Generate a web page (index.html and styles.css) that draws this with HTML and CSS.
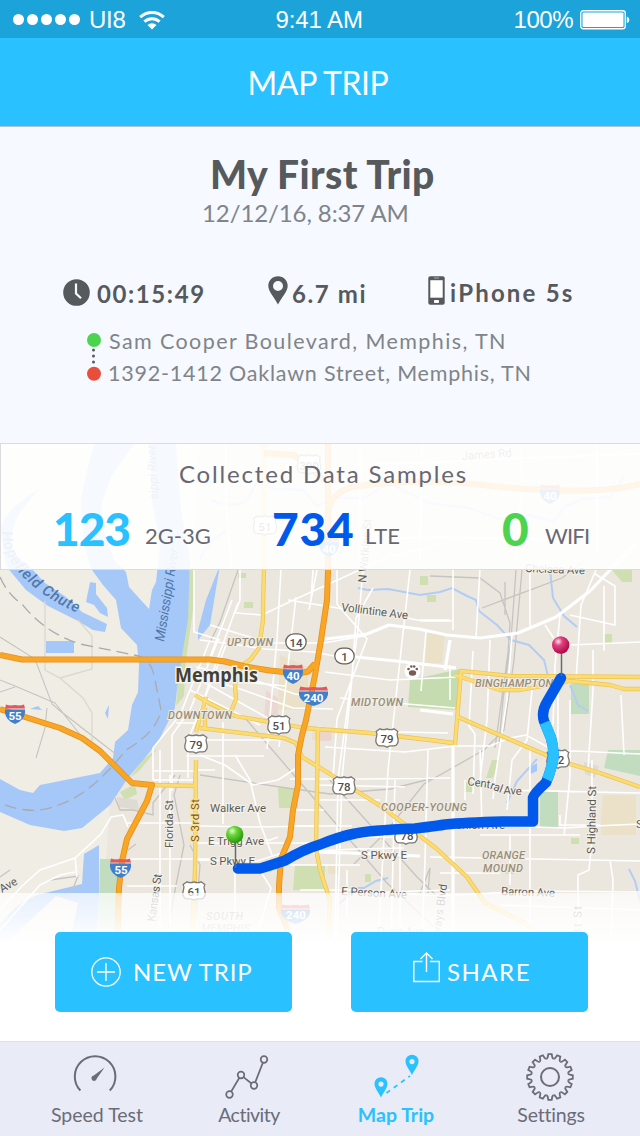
FILE: index.html
```html
<!DOCTYPE html>
<html lang="en">
<head>
<meta charset="utf-8">
<title>Map Trip</title>
<link rel="stylesheet" href="styles.css">
</head>
<body>
<div class="screen">
  <header class="statusbar">
    <div class="carrier"><span class="signal"><i></i><i></i><i></i><i></i><i></i></span><span class="carrier-name">UI8</span>
      <svg class="wifi" width="26" height="20" viewBox="0 0 26 20"><g fill="none" stroke="#fff" stroke-width="3"><path d="M1.2 7.2a17 17 0 0 1 23.6 0"/><path d="M5.4 11.7a11 11 0 0 1 15.2 0"/></g><path d="M8.5 15a6.6 6.6 0 0 1 9 0L13 19.4z" fill="#fff"/></svg>
    </div>
    <div class="clock">9:41 AM</div>
    <div class="battery"><span>100%</span>
      <svg width="50" height="20" viewBox="0 0 50 20"><rect x=".75" y=".75" width="44.5" height="18" rx="2.5" fill="none" stroke="#fff" stroke-width="1.3"/><rect x="2.5" y="2.5" width="41" height="14.5" rx="1" fill="#fff"/><path d="M46.8 6.5q2.6 1 2.6 3.4t-2.6 3.3z" fill="#fff"/></svg>
    </div>
  </header>
  <div class="navbar"><h1>MAP TRIP</h1></div>

  <section class="trip">
    <h2>My First Trip</h2>
    <p class="date">12/12/16, 8:37 AM</p>
    <div class="stats">
      <div class="stat time"><svg width="27" height="27" viewBox="0 0 27 27"><circle cx="13.5" cy="13.5" r="13.3" fill="#565a5c"/><path d="M13 4.5v10l5 4.8" fill="none" stroke="#f6f9ff" stroke-width="2.2"/></svg><span>00:15:49</span></div>
      <div class="stat dist"><svg width="20" height="29" viewBox="0 0 20 29"><path fill="#565a5c" fill-rule="evenodd" d="M10 .2C4.500.2.3 4.400.3 9.800c0 6 6.200 11.500 9.700 18.800 3.500-7.300 9.700-12.800 9.700-18.800C19.700 4.400 15.500.2 10 .2zM10 5a5 5 0 1 1 0 10 5 5 0 0 1 0-10z"/></svg><span>6.7 mi</span></div>
      <div class="stat phone"><svg width="17" height="29" viewBox="0 0 17 29"><rect x=".3" y=".3" width="16.400" height="28.400" rx="2" fill="#565a5c"/><path d="M2.300 4.200h12.400v17.500H2.300z" fill="#fff"/><path d="M6 2h5" stroke="#aaa"/><rect x="6" y="24" width="5" height="3" rx=".7" fill="#fff"/></svg><span>iPhone 5s</span></div>
    </div>
    <div class="route">
      <svg width="16" height="50" viewBox="0 0 16 50"><circle cx="8" cy="8" r="7" fill="#4cd451"/><circle cx="8" cy="41.700" r="7" fill="#e94e3d"/><g fill="#565a5c"><circle cx="7.500" cy="18" r="1.500"/><circle cx="7.500" cy="24" r="1.500"/><circle cx="7.500" cy="30" r="1.500"/></g></svg>
      <div class="stops"><p class="from">Sam Cooper Boulevard, Memphis, TN</p><p class="to">1392-1412 Oaklawn Street, Memphis, TN</p></div>
    </div>
  </section>

  <section class="mapview">
    <svg class="map" width="640" height="598" viewBox="0 443 640 598">
      <defs>
        <symbol id="us" viewBox="0 0 24 20" overflow="visible"><path d="M5 .8Q8.500 2.500 12 .8 15.500 2.500 19 .8L22.800 3.500Q21.300 6 22.500 9 24.500 14 21 17.300 18.500 18 15.500 17.800 13.300 18 12 19.200 10.700 18 8.500 17.800 5.500 18 3 17.300-.5 14 1.500 9 2.700 6 1.200 3.500z" fill="#fff" stroke="#7b7973" stroke-width="1.300"/></symbol>
        <symbol id="oval" viewBox="0 0 22 18" overflow="visible"><rect x=".8" y=".8" width="20.400" height="16.400" rx="8.200" fill="#fff" stroke="#65635d" stroke-width="1.300"/></symbol>
        <symbol id="inter" viewBox="0 0 20 20" preserveAspectRatio="none"><path d="M0 5.500h20Q21 16 10 20-1 16 0 5.500z" fill="#3f7fcb"/><path d="M1 .5Q5 2 10 1q5 1 9-.5l1 4H0z" fill="#df5961"/></symbol>
        <radialGradient id="gpin" cx=".36" cy=".3" r=".7"><stop offset="0" stop-color="#e4fbd5"/><stop offset=".35" stop-color="#6cd83c"/><stop offset="1" stop-color="#2b9a0c"/></radialGradient>
        <radialGradient id="rpin" cx=".36" cy=".3" r=".7"><stop offset="0" stop-color="#ffe3ee"/><stop offset=".35" stop-color="#e0407f"/><stop offset="1" stop-color="#b00948"/></radialGradient>
        <linearGradient id="fade" x1="0" y1="0" x2="0" y2="1"><stop offset="0" stop-color="#fff" stop-opacity=".72"/><stop offset=".85" stop-color="#fff" stop-opacity="1"/></linearGradient>
      </defs>
      <path d="M0 443h640v598H0z" fill="#ebe7df"/>
      <path d="M0 443H200L189 620 175 712 110 805 100 941H0z" fill="#f0ede5"/>
      <!-- parks and blocks -->
      <g fill="#cfdfb2">
        <path d="M190 568h5l-2 42-7 50-2 36-8 10 3-40 5-45zM158 748l-18 22-10 8 12-18zM120 792l15-8 2 10-12 6z"/>
        <path d="M278 788h20v20h-19zM295 865h30v25h-32zM365 874h6v8h-6zM238 573h8v5h-8zM244 602h9v6h-9zM420 576h8v9h-8zM427 595h9v7h-9zM604 634h8v9h-8zM464 782h9v10h-9zM492 760h7l-6 18h-7zM612 570h20v12h-10zM571 838h8v6h-8zM504 864h10v10h-8z"/>
        <path d="M410 680l50-11-2 41-50-3z" fill="#c4dcb0"/>
        <path d="M571 684h18v30h-18zM540 791h18v36h-18zM608 750h32v26l-36-8zM100 859h20v82H98z" fill="#c2dcc0"/>
      </g>
      <path d="M427 633h18l-3 30h-17zM603 795h33v40h-35v-16zM280 655l28 12v43h-30zM312 728h20v12h-20zM328 866h12v8h-12z" fill="#e9dfc0" opacity=".75"/>
      <path d="M266 690l12 8v25h-14zM315 731h16v10h-16z" fill="#edcfcc" opacity=".65"/>
      <path d="M117 797l20 3 2 10-20-3zM584 762l15 4-4 12-10-4z" fill="#dedbd2"/>
      <!-- water -->
      <g fill="#a6c8f8">
        <path d="M95 443Q86 470 81 500 82 545 92 570L103 585 116 600 121 628 137 645 139 665 138 692 132 705 128 730 115 742 113 758 100 773 70 779 40 785 33 793 20 790 0 779V812L30 825 64 831 82 828 98 815 110 805 128 778 158 742 175 708 177 690 183 650 188 620 190 560 181 510 176 443H150L152 500 160 545 156 582 152 590 149 609 129 587 126 572 114 560 105 535 101 505 112 475 135 443z"/>
        <path d="M0 528Q10 505 38 490L20 512Q8 532 13 552L32 569 45 583 66 597 82 612 107 624 105 632 93 630 76 620 48 606 26 590 6 566z"/>
        <path d="M90 582l6 1 0 11 11 14 1 9-8-4-6-8-8-3zM46 641h28v12H46zM84 854l15-9v50l-2 46H70l8-38-22-7-31 29-17 16H0V924Q20 898 45 893L82 884zM220 565L210 625 198 640 198 630 206 600z"/>
        <path d="M105 713l4-8-1 14zM30 709l8-3 4 4zM529 768l8-5v8l-6 3z"/>
      </g>
      <g fill="none" stroke="#b2cdf4" stroke-width="2">
        <path d="M420 595l20-3 12-4 15 8 9 4 3 11 18 14 14 15 18 5 15 15 4 16M570 685l8 20 10 6M550 570l3 28 11 18 13 11M358 588l10 2 20-1 32 6M338 905l18-17 8 0 12-7 12-3M629 869l6 12 5 20M507 803l10-22 20-22"/>
        <path d="M212 500q8 5 20 5t18-10l8-16 15 10 30 1 14 16 18-8 30 0 24-15 40 20 40 5 30 11 30-4 25 7 10-15 18-8 28-2 14-20M200 560q8-20 25-28" stroke-width="2.500"/>
      </g>
      <!-- rail and minor lines -->
      <g fill="none" stroke="#c6c4c1" stroke-width="1.300">
        <path d="M0 637l35 22 17 45 7 6 58 45M0 680l15 6 40 17 27 34 31 29M0 692l15-5M47 708l-2 20-9 30" stroke-width="1.100"/>
        <path d="M45 601v69l15 8 32-9V636L78 620M60 678l23 20 9 15v28" stroke="#dcd8ce"/>
        <path d="M238 570l-18 52-10 20M245 718l60 70 82 95 80 75M200 775l80 12 50 7 35-3 25-2 40-10M328 778l90 100 22 21M115 798l5 12 13 0 20 5 0-12 22-28M482 608l80-30 20-15M505 615l0-33M516 570l-5 70-8 60-4 44M522 570l-8 90-10 70-20 20-60 34-40 50-30 30M430 576l50 2 20 15 10 30-2 30-13 95M420 893l10-25-2 25"/>
        <path d="M180 775l-6 20 10 50-8 40-10 55M50 880l28-4-6 15M0 877l10-7M128 850l8-6M190 845l10 20-6 75" />
      </g>
      <path d="M0 577q8 18 22 27Q45 633 80 644l59 12Q152 660 155 680l6 30q-4 22-35 40-35 45-70 56-25 10-56-3" fill="none" stroke="#aaa" stroke-width="1.300" stroke-dasharray="12 6"/>
      <!-- street grid -->
      <g fill="none" stroke="#fff" stroke-width="1.600">
        <path d="M194 569v63l26 8M210 640l-30 75-27 33v32M218 640l-28 70-18 25v56M226 645l-26 65-12 30v38M238 603l-22 60-20 60M232 600l-25 65M153 771h42M153 780h42M176 723h24M200 740h80M186 756h78M200 640l32 4 33 5 48 3 27 5M210 625l60 18 54 0 40-7M236 613l26 2 36-17 90-41 50-12M196 667l55 12 44 15 30 5M195 675l48 15 50 18 40 1M190 690l70 35M200 680l80 45M205 669l30 12 50 5"/>
        <path d="M240 570v30l-5 13M281 569l-4 70-10 110M296 597l-7 60-10 90M313 570l-2 30M317 570l-8 40M200 755l25 10 28 20 25-5 20-13M223 722v102M235 755l15 25 10 43 12 32M200 826l55 1 60-1M195 843h50l70 0M195 860l62 1 22-7 40-3 35-2 50-1M250 840l20 0 8-3M256 864l15 24-15 50M235 862v80M337 569v35l30 35-30 80-4 60M363 569l-5 60-20 150-3 160M373 588l-17 30-4 60-10 100-5 160M410 570l-10 90-12 110-10 170M426 631l-5 60M453 570l0 60M480 569l-4 68M530 570l0 58M545 625l12 18M560 615l-5 50-2 60M596 570l-15 35-5 75M604 586v65"/>
        <path d="M392 615l30 6 30 0M288 600l50 8 40 6M325 672l65 8 70-3M340 698l55 5 60 5M318 727l30 4 100 2M325 747l80 5 50-6h35l20-8 16-3 27 15 110 5M420 620l30 0M570 615l45 10V586l-20-12M570 645l70-3M450 665v35M473 651l-4 75 6 8-2 60M490 640l-3 80-7 60M512 634l-5 65-12 80-2 20M532 690l-5 50-15 20-5 50M558 673v80M570 700v76l-6 60M593 650v40l-5 80M621 695l3 60M290 779l70 0 90-1M315 785l90 2M320 800h60M292 810h32M292 826l60 0M330 837h80M347 870v45M290 865h70M300 890l60 0 80 6 90-5 110 1M350 893l100-3M395 779l-4 160M400 840l0 100M428 750l-3 110-3 80M465 780v20M480 750l2 80M510 835v50M530 750v190M560 815v10l40 0M500 790l140 3M500 826l65 2 30-2 45-2M480 835l100 0M430 857l210 4M440 873h60M592 760v80l-3 30-11 5v20l2 45M610 860l3 20-2 60M500 905l140 5M160 750v180M170 775v165M195 830v110M127 823h66M127 859h90M127 886l50 0M195 770h20"/>
        <path d="M0 910l22-24 18-16 35-12 26-24 10-17 12-2 5 12M0 930l40-45 20-10 15-3M75 857l2 20"/>
        <path d="M226 443v60l6 67M265 443v80M360 443l0 120M422 443l-2 120M520 443l2 42-6 75M597 443v110M340 465l80-2 100-5 120-4M340 540l100-3 120 3"/>
      </g>
      <g fill="none" stroke="#fff" stroke-width="3.200" stroke-linejoin="round">
        <path d="M325 639l27-3 15-2 22-9 30 4 28 6 33 3 38-5 38-16 34-26 20-21 25-25M346 656l50 5 60 7M420 710l33 4M453 745v195M450 640l-5 30M280 855l30-3 40 1 70 3"/>
      </g>
      <!-- arterial roads -->
      <g fill="none" stroke-linejoin="round">
        <path d="M264 443v127l-1 35 0 15-4 28-8 11-10 7-6 18 1 15-8 20M195 695l14 8 26 13 70 12 65 5 60 7 23 3M200 728l84 10 12 5 6 14 20 12 60 38 55 42 30 28 18 26 40 20 20 18 16 32M455 745l6-74 50 5 129 1M455 675l45 15 20 0 50-9 40 4 14 4 16 0M458 717l60 26 42 18 40 12 40 14M153 785l42 1 1-20M318 728l-2 120 4 22 10 30-2 40M196 760l-1 110-3 70M196 732l10-35M205 728l0-20" stroke="#edc34e" stroke-width="4.300"/>
        <path d="M264 443v127l-1 35 0 15-4 28-8 11-10 7-6 18 1 15-8 20M195 695l14 8 26 13 70 12 65 5 60 7 23 3M200 728l84 10 12 5 6 14 20 12 60 38 55 42 30 28 18 26 40 20 20 18 16 32M455 745l6-74 50 5 129 1M455 675l45 15 20 0 50-9 40 4 14 4 16 0M458 717l60 26 42 18 40 12 40 14M153 785l42 1 1-20M318 728l-2 120 4 22 10 30-2 40M196 760l-1 110-3 70M196 732l10-35M205 728l0-20" stroke="#fbdb74" stroke-width="2.900"/>
        <path d="M0 655l22 4.500 188 0 15 2 20 5 25 4 28 3 10-2 7-8M0 709l60 19 22 10 18 13 32 32 20 2-5 16-20 38-5 22-3 27-2 62M328 443l0 127-1 30-6 40-6 35-6 30-3 15-4 15-4 20 0 30-5 25-3 27-9 22-2 27 0 22 8 20 5 50M328 515q2-25 30-29 60-8 125-1 110 12 157-1M264 453l30 2 30 25" stroke="#e88f20" stroke-width="6"/>
        <path d="M0 655l22 4.500 188 0 15 2 20 5 25 4 28 3 10-2 7-8M0 709l60 19 22 10 18 13 32 32 20 2-5 16-20 38-5 22-3 27-2 62M328 443l0 127-1 30-6 40-6 35-6 30-3 15-4 15-4 20 0 30-5 25-3 27-9 22-2 27 0 22 8 20 5 50M328 515q2-25 30-29 60-8 125-1 110 12 157-1M264 453l30 2 30 25" stroke="#f8a625" stroke-width="4.400"/>
      </g>
      <!-- shields -->
      <use href="#oval" x="285" y="633" width="22" height="18"/><use href="#oval" x="334" y="647" width="21" height="18"/>
      <use href="#us" x="267" y="715" width="24" height="20"/><use href="#us" x="184" y="734" width="24" height="20"/><use href="#us" x="375" y="728" width="24" height="20"/><use href="#us" x="332" y="776" width="24" height="20"/><use href="#us" x="182" y="881" width="24" height="20"/><use href="#us" x="546" y="749" width="24" height="20"/><use href="#us" x="394" y="825" width="24" height="20"/><use href="#us" x="252" y="515" width="26" height="21"/><use href="#us" x="296" y="454" width="26" height="21"/>
      <use href="#inter" x="283" y="664" width="20" height="20"/><use href="#inter" x="299" y="686" width="29" height="20"/><use href="#inter" x="5" y="704" width="20" height="20"/><use href="#inter" x="110" y="858" width="21" height="20"/><use href="#inter" x="281" y="904" width="29" height="20"/><use href="#inter" x="540" y="484" width="20" height="20"/><use href="#inter" x="319" y="536" width="20" height="21"/>
      <g class="num"><text x="296" y="646.500">14</text><text x="344.500" y="660.500">1</text><text x="279" y="730">51</text><text x="196" y="749">79</text><text x="387" y="743">79</text><text x="344" y="791">78</text><text x="194" y="896">61</text><text x="561" y="764">2</text><text x="407" y="840">78</text><text x="265" y="531">51</text><text x="309" y="470">300</text></g>
      <g class="num light"><text x="293" y="680">40</text><text x="313.500" y="702">240</text><text x="15" y="720">55</text><text x="121" y="874">55</text><text x="296" y="919">240</text><text x="550" y="500">40</text><text x="329" y="553">40</text></g>
      <circle cx="412.500" cy="671" r="8" fill="#fff"/><g fill="#795b53"><ellipse cx="412.500" cy="673" rx="3.700" ry="2.700"/><circle cx="408.500" cy="669" r="1.300"/><circle cx="411.300" cy="666.500" r="1.300"/><circle cx="414.200" cy="666.500" r="1.300"/><circle cx="416.800" cy="669" r="1.300"/></g>
      <!-- labels -->
      <g class="street">
        <text x="341" y="611" transform="rotate(7 341 611)" textLength="67">Vollintine Ave</text>
        <text x="210" y="812" textLength="56">Walker Ave</text><text x="208" y="845" textLength="56">E Trigg Ave</text><text x="210" y="865" textLength="45">S Pkwy E</text><text x="361" y="859" textLength="46">S Pkwy E</text>
        <text x="341" y="895" transform="rotate(3 341 895)" textLength="66">E Person Ave</text><text x="377" y="935" textLength="47">Dunn Ave</text><text x="501" y="895" transform="rotate(2 501 895)" textLength="54">Barron Ave</text>
        <path id="cen" d="M467 785L488 788 504 794 522 795" fill="none" stroke="none"/><text textLength="56"><textPath href="#cen">Central Ave</textPath></text>
        <text x="455" y="829" textLength="50">Union Ave</text><text x="525" y="572" transform="rotate(2 525 572)" textLength="60">Chelsea Ave</text><text x="462" y="460" transform="rotate(-4 462 460)" textLength="50">James Rd</text>
        <text transform="translate(173 848) rotate(-90)" textLength="48">Florida St</text><text class="third" transform="translate(199 842) rotate(-90)" textLength="43">S 3rd St</text><text transform="translate(155 922) rotate(-82)" textLength="48">Kansas St</text><text transform="translate(595 854) rotate(-89)" textLength="68">S Highland St</text><text transform="translate(440 936) rotate(-82)" textLength="52">ways Blvd</text><text transform="translate(581 940) rotate(-89)" textLength="34">ott St</text><text transform="translate(366 583) rotate(-85)" textLength="64">N Watkins St</text><text x="2" y="893" transform="rotate(-30 2 893)">Ave</text><text x="636" y="828">S</text>
      </g>
      <g class="area"><text x="227" y="646" textLength="46">UPTOWN</text><text x="168" y="719" textLength="64">DOWNTOWN</text><text x="351" y="706" textLength="52">MIDTOWN</text><text x="475" y="687" textLength="78">BINGHAMPTON</text><text x="381" y="811" textLength="86">COOPER-YOUNG</text><text x="482" y="859" textLength="43">ORANGE</text><text x="483" y="872" textLength="40">MOUND</text><text x="206" y="920" textLength="37">SOUTH</text><text x="201" y="932" textLength="49">MEMPHIS</text></g>
      <g class="river"><text transform="translate(164 642) rotate(-81)" textLength="94">Mississippi River</text><text transform="translate(158 499) rotate(-93)" textLength="54" class="upper">sippi River</text><path id="hop" d="M2 532Q3 558 25 579T78 613" fill="none"/><text class="chute" textLength="116"><textPath href="#hop">Hopefield Chute</textPath></text></g>
      <text class="city" x="175" y="682" textLength="83" lengthAdjust="spacingAndGlyphs">Memphis</text>
      <path d="M0 893h640v60H0z" fill="url(#fade)"/><path d="M0 950h640v91H0z" fill="#fff"/>
      <!-- recorded route -->
      <g fill="none" stroke-width="10.500" stroke-linecap="round" stroke-linejoin="round">
        <path d="M238 868.500h22q7-2 25-8 18-11 35-16 20-8 35-11 12-3 60-5 25-3 30-4 20-2 57-3h31v-24q1-4 13-15Q549 776 551 768 556 755 551 738L544 721Q541 712 547 702L561 678" stroke="#0059ea"/>
        <path d="M544.700 722.500L551 738Q556 755 551 768 549.500 774 547 779.500" stroke="#29c1ff" stroke-linecap="butt"/>
      </g>
      <path d="M235.500 840v28M561.500 652v24" stroke="#66696d" stroke-width="1.500"/>
      <circle cx="234.700" cy="834.500" r="8.700" fill="url(#gpin)"/><circle cx="560.700" cy="645" r="8.700" fill="url(#rpin)"/>
    </svg>
    <div class="samples">
      <h3>Collected Data Samples</h3>
      <div class="counts"><b class="c3g">123</b><span class="l3g">2G-3G</span><b class="clte">734</b><span class="llte">LTE</span><b class="cwifi">0</b><span class="lwifi">WIFI</span></div>
    </div>
    <div class="actions">
      <div class="btn new"><svg width="30" height="30" viewBox="0 0 30 30" fill="none" stroke="#fff" stroke-width="1.300"><circle cx="15" cy="15" r="14.200"/><path d="M6 15h18M15 6v18"/></svg><span>NEW TRIP</span></div>
      <div class="btn share"><svg width="27" height="31" viewBox="0 0 27 31" fill="none" stroke="#fff" stroke-width="1.400"><path d="M9.500 9.500H.8v20h25.500v-20H17M13.500 20V1.500M7.500 7l6-6 6 6"/></svg><span>SHARE</span></div>
    </div>
  </section>

  <nav class="tabs">
    <div class="tab speed"><svg width="46" height="48" viewBox="0 0 46 48"><path d="M8.400 36.500a20.300 20.300 0 1 1 29.400 0" fill="none" stroke="#6b6c78" stroke-width="2"/><path d="M32.500 13.500L24.800 24.500a2.700 2.700 0 1 1-3-3z" fill="#6b6c78"/></svg><span>Speed Test</span></div>
    <div class="tab activity"><svg width="46" height="48" viewBox="0 0 46 48" fill="none" stroke="#6b6c78" stroke-width="1.700"><circle cx="4.500" cy="40.500" r="3.300"/><circle cx="16" cy="21" r="3.300"/><circle cx="29" cy="31.500" r="3.300"/><circle cx="39" cy="5.500" r="3.300"/><path d="M6.200 37.500l8-13.500M18.500 23.200l8 6.300M30.200 28.400l7.700-19.800"/></svg><span>Activity</span></div>
    <div class="tab trips"><svg width="46" height="48" viewBox="0 0 46 48"><g fill="#29c1ff" fill-rule="evenodd"><path id="pin" d="M8 23.200a6.500 6.500 0 0 0-6.500 6.500C1.500 34 5.500 38 8 43.500c2.500-5.500 6.500-9.500 6.500-13.800A6.500 6.500 0 0 0 8 23.200zm0 4.300a2.600 2.600 0 1 1 0 5.200 2.600 2.600 0 0 1 0-5.200z"/><use href="#pin" x="31" y="-22.500"/></g><path d="M13.500 39L37 22" stroke="#29c1ff" stroke-width="1.700" stroke-dasharray="4.500 4.500"/></svg><span>Map Trip</span></div>
    <div class="tab settings"><svg width="48" height="48" viewBox="-24 -24 48 48" fill="none" stroke="#6b6c78" stroke-width="1.800"><defs><g id="quad"><path id="cog" d="M-3.610-18.140Q-2.500-18.600-2.300-19.800L-1.700-22.800H1.700L2.300-19.800Q2.500-18.600 3.610-18.140"/><use href="#cog" transform="rotate(22.500)"/><use href="#cog" transform="rotate(45)"/><use href="#cog" transform="rotate(67.500)"/></g></defs><use href="#quad"/><use href="#quad" transform="rotate(90)"/><use href="#quad" transform="rotate(180)"/><use href="#quad" transform="rotate(270)"/><circle r="9" stroke-width="2"/></svg><span>Settings</span></div>
  </nav>
</div>
</body>
</html>
```
FILE: styles.css
```css
* { box-sizing: border-box; }
body { margin: 0; font-family: Lato, "Open Sans", sans-serif; font-variant-ligatures: none; }
h1, h2, h3, p { margin: 0; font-weight: 400; }
svg { display: block; flex: none; }
span, b, h1, h2, h3, p { white-space: nowrap; }
.screen { width: 640px; height: 1136px; display: grid; grid-template-rows: 38px 89px 316px 598px 95px; background: #fff; overflow: hidden; }

.statusbar { background: #1ca3da; color: #fff; font: 24px/38px "Liberation Sans", Arial, sans-serif; display: grid; grid-template-columns: 1fr 88px 1fr; padding: 0 10px 0 13px; }
.carrier { display: flex; align-items: center; }
.signal { display: flex; gap: 3px; }
.signal i { width: 11px; height: 11px; border-radius: 50%; background: #fff; }
.carrier-name { margin: 1px 14px 0 9px; letter-spacing: -.3px; }
.clock { letter-spacing: -.1px; white-space: nowrap; padding-top: 1px; margin-left: -2px; }
.battery { display: flex; justify-content: flex-end; align-items: center; gap: 7px; }
.battery span { letter-spacing: -.5px; }

.navbar { background: #29c1ff; color: #fff; border-bottom: 1px solid #b9bed2; text-align: center; padding-right: 4px; }
.navbar h1 { font-size: 32px; line-height: 89px; letter-spacing: -.4px; }

.trip { background: #f6f9ff; color: #565a5c; }
.trip h2 { margin: 23px 0 0 210px; font-size: 39px; line-height: 48px; font-weight: 900; letter-spacing: .4px; }
.date { margin: 0 0 0 202px; font-size: 24px; line-height: 30px; letter-spacing: -.100px; color: #808488; }
.stats { margin: 46px 0 0 63px; display: flex; height: 36px; }
.stat { display: flex; font-weight: 700; font-size: 24px; line-height: 39px; letter-spacing: 1.600px; }
.time { width: 205px; gap: 7px; }
.time svg { margin-top: 5px; }
.dist { width: 160px; gap: 4px; }
.phone { gap: 5px; letter-spacing: 2.200px; }
.dist svg, .phone svg { margin-top: 2px; }
.phone span { margin-top: -1px; }
.route { margin: 21px 0 0 86px; display: flex; gap: 7px; font-size: 21.500px; color: #808488; }
.route svg { margin-top: 1px; }
.stops p { line-height: 32px; }
.stops { margin-top: -6px; }
.from { letter-spacing: 1.400px; }
.to { letter-spacing: .780px; margin-left: -1px; }

.mapview { display: grid; grid-template-rows: 127px 1fr 148px; grid-template-columns: 640px; }
.map { grid-area: 1 / 1 / 4 / 2; }
.samples { grid-area: 1 / 1; background: rgba(255,255,255,.9); border: 1px solid #dcdcdf; border-right: 0; color: #686873; }
.samples h3 { margin: 15px 0 0 178px; font-size: 24px; line-height: 30px; letter-spacing: 1.830px; }
.counts { display: flex; align-items: baseline; padding-left: 52px; height: 60px; line-height: 60px; margin-top: 10px; font-size: 22px; }
.counts b { font-size: 46px; font-weight: 900; }
.counts span { position: relative; top: -2px; }
.c3g { width: 92px; color: #29c1ff; letter-spacing: -1px; }
.l3g { width: 127px; }
.clte { width: 93px; color: #0059ea; letter-spacing: .8px; }
.llte { width: 137px; }
.cwifi { width: 43px; color: #4cd451; }
.lwifi { letter-spacing: -.8px; }
.actions { grid-area: 3 / 1; display: flex; gap: 59px; padding: 39px 0 0 55px; }
.btn { width: 237px; height: 80px; border-radius: 5px; background: #29c1ff; color: #fff; display: flex; align-items: center; font-size: 24px; letter-spacing: 1.500px; }
.new { padding-left: 36px; gap: 12px; letter-spacing: .900px; }
.share { padding-left: 62px; gap: 7px; }
.btn span { margin-top: -2px; }
.share svg { margin-top: -9px; }

.tabs { background: #e9ebf7; border-top: 1px solid #dfe0ea; display: flex; padding-top: 12px; color: #6b6c78; font-size: 19.500px; }
.tab { display: flex; flex-direction: column; align-items: center; }
.tab span { line-height: 26px; }
.speed { margin-left: 50px; width: 94px; }
.speed svg { margin-right: 5px; }
.activity { margin-left: 74px; width: 62px; letter-spacing: -.5px; }
.activity svg { margin-right: 3px; }
.trips { margin-left: 78px; width: 76px; color: #29c1ff; font-weight: 700; }
.settings { margin-left: 83px; width: 68px; letter-spacing: -.2px; }
.settings svg { margin-right: 3px; margin-top: -1px; margin-bottom: 1px; }

.map text { font-family: Roboto, "Noto Sans", sans-serif; }
.num text { font-size: 11.500px; fill: #504e49; text-anchor: middle; font-weight: 500; }
.num.light text { fill: #fff; font-weight: 700; }
.street text { font-size: 11.500px; fill: #5f5c55; stroke: #f3f1eb; stroke-width: 2px; paint-order: stroke; }
.street .third { fill: #7a5624; stroke: #fbe49a; }
.area text { font-size: 11px; font-weight: 500; font-style: italic; fill: #998e75; stroke: #efece5; stroke-width: 2px; paint-order: stroke; }
.river text { font-size: 13.500px; font-style: italic; fill: #4f77ab; }
.river .upper { font-size: 12px; }
.river .chute { font-size: 15px; font-weight: 500; }
.map .city { font-family: "Open Sans", sans-serif; font-size: 19px; font-weight: 700; fill: #443f36; stroke: #f5f3ed; stroke-width: 3px; paint-order: stroke; }
```
